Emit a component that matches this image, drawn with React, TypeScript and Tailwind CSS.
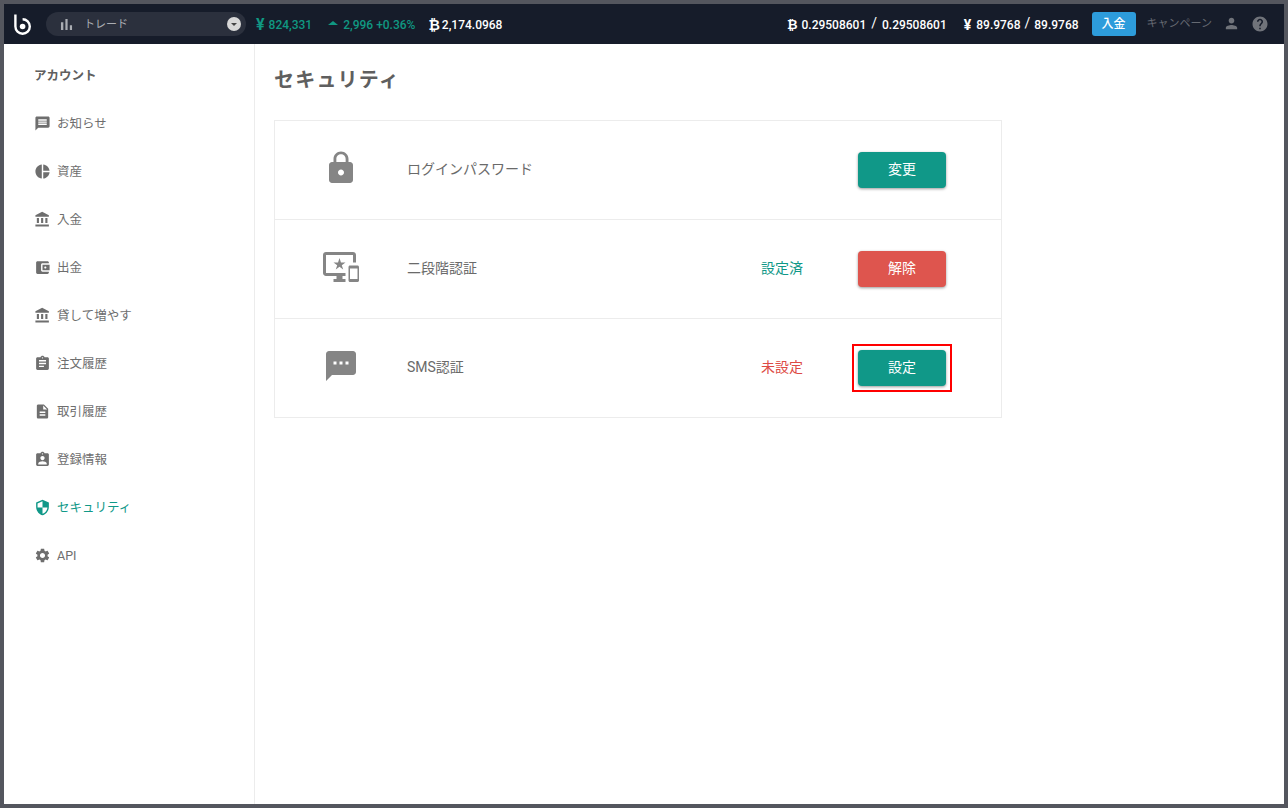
import type { ReactNode } from "react";

const FONT = "font-['Roboto','Noto_Sans_CJK_JP',sans-serif]";

const ICONS = {
  message:
    "M20 2H4c-1.1 0-1.99.9-1.99 2L2 22l4-4h14c1.1 0 2-.9 2-2V4c0-1.1-.9-2-2-2zm-2 12H6v-2h12v2zm0-3H6V9h12v2zm0-3H6V6h12v2z",
  pie: "M11 2v20c-5.07-.5-9-4.79-9-10s3.93-9.5 9-10zm2.03 0v8.99H22c-.47-4.74-4.24-8.52-8.97-8.99zm0 11.01V22c4.74-.47 8.5-4.25 8.97-8.99h-8.97z",
  bank: "M4 10v7h3v-7H4zm6 0v7h3v-7h-3zM2 22h19v-3H2v3zm14-12v7h3v-7h-3zm-4.5-9L2 6v2h19V6l-9.5-5z",
  wallet:
    "M21 18v1c0 1.1-.9 2-2 2H5c-1.11 0-2-.9-2-2V5c0-1.1.89-2 2-2h14c1.1 0 2 .9 2 2v1h-9c-1.11 0-2 .9-2 2v8c0 1.1.89 2 2 2h9zm-9-2h10V8H12v8zm4-2.5c-.83 0-1.5-.67-1.5-1.5s.67-1.5 1.5-1.5 1.5.67 1.5 1.5-.67 1.5-1.5 1.5z",
  assignment:
    "M19 3h-4.18C14.4 1.84 13.3 1 12 1c-1.3 0-2.4.84-2.82 2H5c-1.1 0-2 .9-2 2v14c0 1.1.9 2 2 2h14c1.1 0 2-.9 2-2V5c0-1.1-.9-2-2-2zm-7 0c.55 0 1 .45 1 1s-.45 1-1 1-1-.45-1-1 .45-1 1-1zm2 14H7v-2h7v2zm3-4H7v-2h10v2zm0-4H7V7h10v2z",
  description:
    "M14 2H6c-1.1 0-1.99.9-1.99 2L4 20c0 1.1.89 2 1.99 2H18c1.1 0 2-.9 2-2V8l-6-6zm2 16H8v-2h8v2zm0-4H8v-2h8v2zm-3-5V3.5L18.5 9H13z",
  assignmentInd:
    "M19 3h-4.18C14.4 1.84 13.3 1 12 1c-1.3 0-2.4.84-2.82 2H5c-1.1 0-2 .9-2 2v14c0 1.1.9 2 2 2h14c1.1 0 2-.9 2-2V5c0-1.1-.9-2-2-2zm-7 0c.55 0 1 .45 1 1s-.45 1-1 1-1-.45-1-1 .45-1 1-1zm0 4c1.66 0 3 1.34 3 3s-1.34 3-3 3-3-1.34-3-3 1.34-3 3-3zm6 12H6v-1.4c0-2 4-3.1 6-3.1s6 1.1 6 3.1V19z",
  security:
    "M12 1L3 5v6c0 5.55 3.84 10.74 9 12 5.16-1.26 9-6.45 9-12V5l-9-4zm0 10.99h7c-.53 4.12-3.28 7.79-7 8.94V12H5V6.3l7-3.11v8.8z",
  settings:
    "M19.14 12.94c.04-.3.06-.61.06-.94 0-.32-.02-.64-.07-.94l2.03-1.58c.18-.14.23-.41.12-.61l-1.92-3.32c-.12-.22-.37-.29-.59-.22l-2.39.96c-.5-.38-1.03-.7-1.62-.94l-.36-2.54c-.04-.24-.24-.41-.48-.41h-3.84c-.24 0-.43.17-.47.41l-.36 2.54c-.59.24-1.13.57-1.62.94l-2.39-.96c-.22-.08-.47 0-.59.22L2.74 8.87c-.12.21-.08.47.12.61l2.03 1.58c-.05.3-.09.63-.09.94s.02.64.07.94l-2.03 1.58c-.18.14-.23.41-.12.61l1.92 3.32c.12.22.37.29.59.22l2.39-.96c.5.38 1.03.7 1.62.94l.36 2.54c.05.24.24.41.48.41h3.84c.24 0 .44-.17.47-.41l.36-2.54c.59-.24 1.13-.56 1.62-.94l2.39.96c.22.08.47 0 .59-.22l1.92-3.32c.12-.22.07-.47-.12-.61l-2.01-1.58zM12 15.6c-1.98 0-3.6-1.62-3.6-3.6s1.62-3.6 3.6-3.6 3.6 1.62 3.6 3.6-1.62 3.6-3.6 3.6z",
  lock: "M18 8h-1V6c0-2.76-2.24-5-5-5S7 3.24 7 6v2H6c-1.1 0-2 .9-2 2v10c0 1.1.9 2 2 2h12c1.1 0 2-.9 2-2V10c0-1.1-.9-2-2-2zm-6 9c-1.1 0-2-.9-2-2s.9-2 2-2 2 .9 2 2-.9 2-2 2zm3.1-9H8.9V6c0-1.71 1.39-3.1 3.1-3.1 1.71 0 3.1 1.39 3.1 3.1v2z",
  sms: "M20 2H4c-1.1 0-1.99.9-1.99 2L2 22l4-4h14c1.1 0 2-.9 2-2V4c0-1.1-.9-2-2-2zM9 11H7V9h2v2zm4 0h-2V9h2v2zm4 0h-2V9h2v2z",
  person:
    "M12 12c2.21 0 4-1.79 4-4s-1.79-4-4-4-4 1.79-4 4 1.79 4 4 4zm0 2c-2.67 0-8 1.34-8 4v2h16v-2c0-2.66-5.33-4-8-4z",
  help: "M12 2C6.48 2 2 6.48 2 12s4.48 10 10 10 10-4.48 10-10S17.52 2 12 2zm1 17h-2v-2h2v2zm2.07-7.75l-.9.92C13.45 12.9 13 13.5 13 15h-2v-.5c0-1.1.45-2.1 1.17-2.83l1.24-1.26c.37-.36.59-.86.59-1.41 0-1.1-.9-2-2-2s-2 .9-2 2H8c0-2.21 1.79-4 4-4s4 1.79 4 4c0 .88-.36 1.68-.93 2.25z",
  chart: "M5 9.2h3V19H5zM10.6 5h2.8v14h-2.8zm5.6 8H19v6h-2.8z",
  devices:
    "M23 11.01L18 11c-.55 0-1 .45-1 1v9c0 .55.45 1 1 1h5c.55 0 1-.45 1-1v-9c0-.55-.45-.99-1-.99zM23 20h-5v-7h5v7zM20 2H2C.89 2 0 2.89 0 4v12c0 1.1.89 2 2 2h7v2H7v2h8v-2h-2v-2h2v-2H2V4h18v5h2V4c0-1.11-.9-2-2-2zm-8.03 7L11 6l-.97 3H7l2.47 1.76-.94 2.91 2.47-1.8 2.47 1.8-.94-2.91L15 9h-3.03z",
} as const;

type IconName = keyof typeof ICONS;

function Icon({ name, className }: { name: IconName; className: string }) {
  return (
    <svg viewBox="0 0 24 24" fill="currentColor" className={`shrink-0 ${className}`} aria-hidden>
      <path d={ICONS[name]} />
    </svg>
  );
}

const NAV_ITEMS: { label: string; icon: IconName; active?: boolean }[] = [
  { label: "お知らせ", icon: "message" },
  { label: "資産", icon: "pie" },
  { label: "入金", icon: "bank" },
  { label: "出金", icon: "wallet" },
  { label: "貸して増やす", icon: "bank" },
  { label: "注文履歴", icon: "assignment" },
  { label: "取引履歴", icon: "description" },
  { label: "登録情報", icon: "assignmentInd" },
  { label: "セキュリティ", icon: "security", active: true },
  { label: "API", icon: "settings" },
];

function Logo() {
  return (
    <svg viewBox="0 0 18 21" className="h-[21px] w-[18px] shrink-0" aria-hidden>
      <path
        d="M1.4 0.5V12.5a7.2 7.2 0 1 0 7.2-7.2"
        fill="none"
        stroke="#fff"
        strokeWidth="2.4"
      />
      <circle cx="8.6" cy="12.5" r="2.8" fill="#fff" />
    </svg>
  );
}

function Header() {
  return (
    <header className="flex h-10 shrink-0 items-center bg-[#161c2a] text-[12px] font-medium">
      <div className="ml-[10px]">
        <Logo />
      </div>
      <div className="ml-[14px] flex h-6 w-[200px] items-center rounded-full bg-[#2b303d] pl-[11px] pr-[5px] text-[#aaadb3]">
        <Icon name="chart" className="h-[19px] w-[19px]" />
        <span className="ml-[8px] flex-1 pt-[2px] text-[11px] font-normal">トレード</span>
        <span className="flex h-[14px] w-[14px] items-center justify-center rounded-full bg-[#d8d8d8]">
          <span className="h-0 w-0 border-x-[3px] border-t-[3px] border-x-transparent border-t-[#444]" />
        </span>
      </div>
      <span className="ml-[10px] flex items-center pt-px text-[#109882]">
        <span className="mr-[4px] text-[16px] leading-4 font-bold">¥</span>824,331
      </span>
      <span className="ml-[16px] flex items-center pt-px text-[#109882]">
        <span className="mr-[5px] h-0 w-0 -translate-y-[2px] border-x-[5px] border-b-[4px] border-x-transparent border-b-[#109882]" />
        2,996 +0.36%
      </span>
      <span className="ml-[13px] flex items-center pt-px text-white">
        <span className="mr-[2px] text-[14px] leading-4 font-bold">₿</span>2,174.0968
      </span>
      <div className="ml-auto flex items-center pt-px text-white">
        <span className="mr-[4px] text-[13px] leading-4 font-bold">₿</span>
        <span>0.29508601</span>
        <span className="mx-[5px] -translate-y-[2px] text-[14px] leading-4 font-normal">/</span>
        <span>0.29508601</span>
        <span className="ml-[17px] mr-[5px] text-[14px] leading-4 font-bold">¥</span>
        <span>89.9768</span>
        <span className="mx-[4px] -translate-y-[2px] text-[14px] leading-4 font-normal">/</span>
        <span>89.9768</span>
        <span className="ml-[13px] flex h-6 w-11 -translate-y-px items-center justify-center rounded-[3px] bg-[#2d9cdb] font-medium">
          入金
        </span>
        <span className="ml-[11px] text-[11px] font-normal text-[#666a72]">キャンペーン</span>
        <Icon name="person" className="ml-[11px] h-[17px] w-[17px] -translate-y-px text-[#70737a]" />
        <Icon name="help" className="ml-[11px] mr-[15px] h-[18px] w-[18px] -translate-y-px text-[#70737a]" />
      </div>
    </header>
  );
}

function Sidebar() {
  return (
    <aside className="w-[251px] shrink-0 border-r border-[#ececec] pt-[22px]">
      <h2 className="mb-[14px] pl-[30px] text-[12.5px] font-bold leading-5 text-[#5f5f5f]">アカウント</h2>
      <nav>
        {NAV_ITEMS.map((item) => (
          <div
            key={item.label}
            className={`flex h-12 items-center pl-[30px] text-[12.5px] ${
              item.active ? "text-[#109888]" : "text-[#6e6e6e]"
            }`}
          >
            <Icon name={item.icon} className="h-[17px] w-[17px] -translate-y-px" />
            <span className="ml-[6px]">{item.label}</span>
          </div>
        ))}
      </nav>
    </aside>
  );
}

function ActionButton({
  children,
  tone,
  outlined,
}: {
  children: ReactNode;
  tone: "green" | "red";
  outlined?: boolean;
}) {
  return (
    <button
      className={`relative flex h-9 w-[88px] items-center justify-center rounded-[4px] pb-[2px] text-[14px] text-white shadow-[0_1px_3px_rgba(0,0,0,0.4)] ${
        tone === "green" ? "bg-[#109888]" : "bg-[#de554e]"
      }`}
    >
      {children}
      {outlined ? <span className="absolute -inset-[6px] border-2 border-[#f00]" /> : null}
    </button>
  );
}

function SecurityRow({
  icon,
  label,
  status,
  statusClass,
  action,
  tone,
  outlined,
  last,
}: {
  icon: ReactNode;
  label: string;
  status?: string;
  statusClass?: string;
  action: string;
  tone: "green" | "red";
  outlined?: boolean;
  last?: boolean;
}) {
  return (
    <div className={`flex items-center ${last ? "h-[98px]" : "h-[99px] border-b border-[#ececec]"}`}>
      <div className="mb-[4px] flex w-[132px] shrink-0 justify-center text-[#858585]">{icon}</div>
      <span className="mb-[2px] flex-1 text-[14px] text-[#6a6a6a]">{label}</span>
      <span className={`mb-[2px] w-[97px] text-[14px] ${statusClass ?? ""}`}>{status}</span>
      <ActionButton tone={tone} outlined={outlined}>
        {action}
      </ActionButton>
      <span className="w-[55px] shrink-0" />
    </div>
  );
}

export default function App() {
  return (
    <div className={`flex h-[808px] w-[1288px] flex-col overflow-hidden bg-[#54565e] p-[4px] ${FONT}`}>
      <Header />
      <div className="flex min-h-0 flex-1 bg-white">
        <Sidebar />
        <main className="flex-1 pl-[19px]">
          <h1 className="mt-[21px] text-[20px] font-bold leading-[30px] tracking-[1.2px] text-[#5f5f5f]">
            セキュリティ
          </h1>
          <div className="mt-[25px] w-[728px] border border-[#ececec]">
            <SecurityRow
              icon={<Icon name="lock" className="h-9 w-9" />}
              label="ログインパスワード"
              action="変更"
              tone="green"
            />
            <SecurityRow
              icon={<Icon name="devices" className="h-9 w-9" />}
              label="二段階認証"
              status="設定済"
              statusClass="text-[#109888]"
              action="解除"
              tone="red"
            />
            <SecurityRow
              icon={<Icon name="sms" className="h-9 w-9" />}
              label="SMS認証"
              status="未設定"
              statusClass="text-[#dd4b45]"
              action="設定"
              tone="green"
              outlined
              last
            />
          </div>
        </main>
      </div>
    </div>
  );
}
